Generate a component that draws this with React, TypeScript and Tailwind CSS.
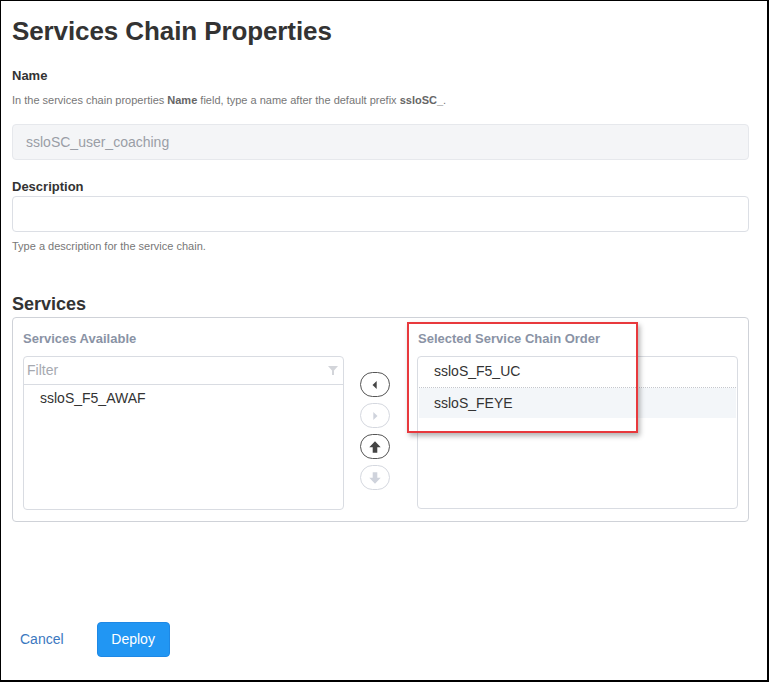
import React from 'react';

const font = { fontFamily: '"Liberation Sans", Arial, sans-serif' };

const CircleBtn: React.FC<{ dir: 'left' | 'right' | 'up' | 'down'; enabled: boolean }> = ({ dir, enabled }) => {
  const c = enabled ? '#444' : '#cfd3dc';
  return (
    <div
      className={`w-[30px] h-[25px] rounded-full border flex items-center justify-center bg-white ${
        enabled ? 'border-[#555]' : 'border-[#d5d8df]'
      }`}
    >
      <svg width="16" height="16" viewBox="0 0 14 14">
        {dir === 'left' && <polygon points="8.5,3.5 8.5,10.5 4.8,7" fill={c} />}
        {dir === 'right' && <polygon points="5.5,3.5 5.5,10.5 9.2,7" fill={c} />}
        {dir === 'up' && (
          <path d="M7 2 L12 7.2 L9 7.2 L9 12 L5 12 L5 7.2 L2 7.2 Z" fill={c} />
        )}
        {dir === 'down' && (
          <path d="M7 12 L12 6.8 L9 6.8 L9 2 L5 2 L5 6.8 L2 6.8 Z" fill={c} />
        )}
      </svg>
    </div>
  );
};

export default function App() {
  return (
    <div style={font} className="w-[770px] h-[683px] bg-white">
      <div className="w-[769px] h-[682px] border border-black border-r-2 border-b-2 relative text-[#333]">
        <div className="pl-[11px] pr-[18px]">
          <h1 className="text-[26px] font-bold leading-none pt-[17px] tracking-[-0.1px]">Services Chain Properties</h1>

          <div className="mt-[25px] text-[13px] font-bold leading-none">Name</div>
          <div className="mt-[13px] text-[11px] text-[#777] leading-none">
            In the services chain properties <span className="font-bold text-[#666]">Name</span> field, type a name after the default prefix{' '}
            <span className="font-bold text-[#666]">ssloSC_</span>.
          </div>
          <div className="mt-[18px] h-[36px] rounded border border-[#e6e8ec] bg-[#f4f5f7] flex items-center pl-[13px] text-[14px] text-[#9a9ea6]">
            ssloSC_user_coaching
          </div>

          <div className="mt-[20px] text-[13px] font-bold leading-none">Description</div>
          <div className="mt-[3px] h-[36px] rounded border border-[#dcdfe5] bg-white" />
          <div className="mt-[9px] text-[11px] text-[#777] leading-none">Type a description for the service chain.</div>

          <h2 className="mt-[43px] text-[18px] font-bold leading-none">Services</h2>

          <div className="mt-[4px] h-[205px] rounded border border-[#cfd2d8] px-[10px] pt-[14px] flex">
            <div className="w-[321px]">
              <div className="text-[13px] font-bold text-[#8a93a5] leading-none">Services Available</div>
              <div className="mt-[11px] h-[154px] rounded border border-[#d9dce2]">
                <div className="h-[28px] border-b border-[#d9dce2] flex items-center justify-between pl-[3px] pr-[5px]">
                  <span className="text-[14px] text-[#a6a9b0]">Filter</span>
                  <svg width="10" height="10" viewBox="0 0 10 10">
                    <path d="M0 0 L10 0 L6 4.5 L6 9 L4 9 L4 4.5 Z" fill="#d3d5da" />
                  </svg>
                </div>
                <div className="pl-[16px] pt-[3px] text-[14px] text-[#333]">ssloS_F5_AWAF</div>
              </div>
            </div>

            <div className="w-[73px] pl-[16px] pt-[40px] flex flex-col gap-[6px]">
              <CircleBtn dir="left" enabled />
              <CircleBtn dir="right" enabled={false} />
              <CircleBtn dir="up" enabled />
              <CircleBtn dir="down" enabled={false} />
            </div>

            <div className="w-[321px]">
              <div className="text-[13px] font-bold text-[#8a93a5] leading-none pl-[1px]">Selected Service Chain Order</div>
              <div className="mt-[11px] h-[153px] rounded border border-[#d9dce2] px-[1px]">
                <div className="h-[31px] flex items-center pb-[2px] pl-[15px] text-[14px] text-[#333] border-b border-dotted border-[#c4c7cd]">
                  ssloS_F5_UC
                </div>
                <div className="h-[30px] flex items-center pl-[15px] text-[14px] text-[#333] bg-[#f3f6f9]">
                  ssloS_FEYE
                </div>
              </div>
            </div>
          </div>

          <div className="mt-[100px] flex items-center">
            <span className="ml-[8px] text-[14px] text-[#3b78c0]">Cancel</span>
            <button className="ml-[33px] w-[73px] h-[35px] rounded bg-[#2196f3] border border-[#1e88e5] text-white text-[14px]">
              Deploy
            </button>
          </div>
        </div>

        <div className="absolute left-[406px] top-[321px] w-[231px] h-[111px] border-2 border-[#e8393d] shadow-[2px_3px_5px_rgba(0,0,0,0.3)] pointer-events-none" />
      </div>
    </div>
  );
}
